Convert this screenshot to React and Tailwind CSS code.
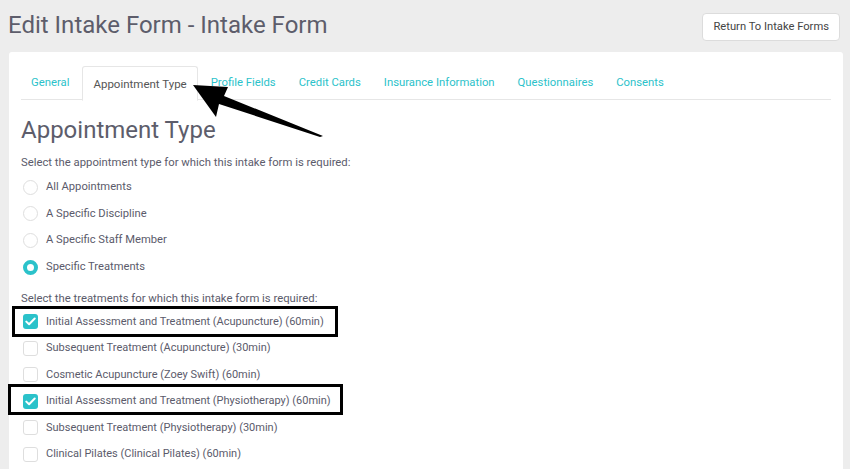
import React from 'react';

const tabs = [
  'General',
  'Appointment Type',
  'Profile Fields',
  'Credit Cards',
  'Insurance Information',
  'Questionnaires',
  'Consents',
];

const appointmentOptions = [
  { label: 'All Appointments', selected: false },
  { label: 'A Specific Discipline', selected: false },
  { label: 'A Specific Staff Member', selected: false },
  { label: 'Specific Treatments', selected: true },
];

const treatments = [
  { label: 'Initial Assessment and Treatment (Acupuncture) (60min)', checked: true },
  { label: 'Subsequent Treatment (Acupuncture) (30min)', checked: false },
  { label: 'Cosmetic Acupuncture (Zoey Swift) (60min)', checked: false },
  { label: 'Initial Assessment and Treatment (Physiotherapy) (60min)', checked: true },
  { label: 'Subsequent Treatment (Physiotherapy) (30min)', checked: false },
  { label: 'Clinical Pilates (Clinical Pilates) (60min)', checked: false },
];

function Radio({ selected }) {
  if (selected) {
    return <span className="w-[15px] h-[15px] rounded-full border-[4px] border-[#2bc2ca] bg-white shrink-0" />;
  }
  return <span className="w-[15px] h-[15px] rounded-full border border-[#dedede] bg-white shrink-0" />;
}

function Checkbox({ checked }) {
  if (checked) {
    return (
      <span className="w-[15px] h-[15px] rounded-[3px] bg-[#2bc2ca] flex items-center justify-center shrink-0">
        <svg width="11" height="9" viewBox="0 0 11 9" fill="none">
          <path d="M1.3 4.6 L4.1 7.3 L9.7 1.5" stroke="white" strokeWidth="2" strokeLinecap="round" strokeLinejoin="round" />
        </svg>
      </span>
    );
  }
  return <span className="w-[15px] h-[15px] rounded-[3px] border border-[#dedede] bg-white shrink-0" />;
}

export default function App() {
  return (
    <div
      className="relative w-[850px] h-[469px] overflow-hidden bg-[#ededed] text-[#5b5b6b]"
      style={{ fontFamily: 'Roboto, "Open Sans", sans-serif' }}
    >
      <div className="flex justify-between items-start">
        <h1 className="pl-[8px] pt-[9px] text-[24px] leading-[32px] text-[#5d5d6b]">Edit Intake Form - Intake Form</h1>
        <button className="mt-[13px] mr-[10px] h-[28px] px-[10px] bg-white border border-[#dcdcdc] rounded-[4px] text-[11.2px] text-[#444]">
          Return To Intake Forms
        </button>
      </div>

      <div className="mt-[11px] ml-[9px] mr-[7px] h-[420px] bg-white rounded-[3px] px-[12px] pt-[14px]">
        <div className="flex border-b border-[#e6e6e6] h-[34px]">
          {tabs.map((t) =>
            t === 'Appointment Type' ? (
              <div
                key={t}
                className="px-[10px] mr-[3px] -mb-px h-[35px] pt-[2px] flex items-center bg-white border border-[#e6e6e6] border-b-white rounded-t-[3px] text-[11.5px] text-[#555]"
              >
                {t}
              </div>
            ) : (
              <div key={t} className="px-[10px] mr-[3px] pt-[2px] flex items-center text-[11.3px] text-[#2bc2ca]">
                {t}
              </div>
            )
          )}
        </div>

        <h2 className="mt-[15px] h-[30px] text-[24px] leading-[30px] text-[#5d5d6b]">Appointment Type</h2>

        <p className="mt-[10px] text-[11.3px] leading-[16px]">Select the appointment type for which this intake form is required:</p>

        <div className="mt-[3px]">
          {appointmentOptions.map((o) => (
            <div key={o.label} className="h-[26.67px] flex items-center gap-[8px] pl-[2px] text-[11.2px]">
              <Radio selected={o.selected} />
              <span>{o.label}</span>
            </div>
          ))}
        </div>

        <p className="mt-[10px] text-[11.3px] leading-[16px]">Select the treatments for which this intake form is required:</p>

        <div className="mt-[2px] relative">
          {treatments.map((o) => (
            <div key={o.label} className="h-[26.5px] flex items-center gap-[8px] pl-[2px] text-[11px]">
              <Checkbox checked={o.checked} />
              <span>{o.label}</span>
            </div>
          ))}
          <div className="absolute left-[-9px] top-[-3px] w-[326px] h-[31px] border-[3px] border-black pointer-events-none" />
          <div className="absolute left-[-13px] top-[75px] w-[335px] h-[31px] border-[3px] border-black pointer-events-none" />
        </div>
      </div>

      <svg className="absolute top-0 left-0 pointer-events-none" width="850" height="469" viewBox="0 0 850 469">
        <polygon points="193,85 228,87 224,96 323,136 320,137 219,104 216,117" fill="#000" />
      </svg>
    </div>
  );
}
